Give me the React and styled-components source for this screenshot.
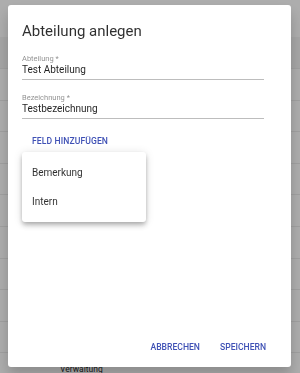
import React from "react";
import styled, { createGlobalStyle } from "styled-components";

const GlobalStyle = createGlobalStyle`
  html, body {
    margin: 0;
    padding: 0;
    background: #ffffff;
    font-family: Roboto, "Liberation Sans", sans-serif;
    overflow: hidden;
  }
`;

const Page = styled.div`
  width: 300px;
  height: 373px;
  overflow: hidden;
  background: #ffffff;
`;

const Toolbar = styled.div`
  height: 37px;
  background: #ffffff;
`;

const HeaderRow = styled.div`
  height: 31px;
  background: #f5f5f5;
  border-bottom: 1px solid #ececec;
`;

const Row = styled.div`
  height: 30.6px;
  border-bottom: 1px solid #ececec;
  display: flex;
  align-items: center;
  padding-left: 60px;
  font-size: 8.5px;
  color: rgba(0, 0, 0, 0.87);
`;

const Backdrop = styled.div`
  position: fixed;
  inset: 0;
  background: rgba(0, 0, 0, 0.32);
`;

const Dialog = styled.div`
  position: fixed;
  left: 8px;
  top: 5px;
  width: 283px;
  height: 362px;
  box-sizing: border-box;
  background: #ffffff;
  border-radius: 3px;
  box-shadow: 0 8px 14px rgba(0, 0, 0, 0.2);
  padding: 16px 14px 14px 14px;
  display: flex;
  flex-direction: column;
`;

const Title = styled.h2`
  margin: 0 0 13px 0;
  font-size: 15px;
  line-height: 20px;
  font-weight: 400;
  color: rgba(0, 0, 0, 0.82);
`;

const Field = styled.div`
  width: 242px;
  display: flex;
  flex-direction: column;
  border-bottom: 1px solid #bdbdbd;
  margin-bottom: ${(p) => p.$gap || 0}px;
`;

const Label = styled.span`
  font-size: 7.5px;
  line-height: 9px;
  color: rgba(0, 0, 0, 0.45);
`;

const Value = styled.span`
  font-size: 10px;
  line-height: 14px;
  padding-bottom: 2px;
  color: rgba(0, 0, 0, 0.87);
`;

const AddButton = styled.button`
  align-self: flex-start;
  margin: 16px 0 0 0;
  padding: 0 10px;
  border: none;
  background: none;
  font-family: inherit;
  font-size: 8.6px;
  font-weight: 500;
  line-height: 12px;
  letter-spacing: 0.1px;
  color: #3f51b5;
  text-transform: uppercase;
`;

const Actions = styled.div`
  margin-top: auto;
  display: flex;
  justify-content: flex-end;
  gap: 20px;
  padding-right: 11px;
  padding-bottom: 0;
`;

const ActionButton = styled.button`
  border: none;
  background: none;
  padding: 0;
  font-family: inherit;
  font-size: 8.6px;
  font-weight: 500;
  line-height: 12px;
  color: #3f51b5;
  text-transform: uppercase;
`;

const Menu = styled.div`
  position: fixed;
  left: 22px;
  top: 152px;
  width: 124px;
  box-sizing: border-box;
  padding: 6px 0;
  background: #ffffff;
  border-radius: 3px;
  box-shadow: 0 2px 4px -1px rgba(0, 0, 0, 0.2), 0 4px 5px 0 rgba(0, 0, 0, 0.14),
    0 1px 10px 0 rgba(0, 0, 0, 0.12);
`;

const MenuItem = styled.div`
  height: 29px;
  display: flex;
  align-items: center;
  padding: 0 10px;
  font-size: 10px;
  color: rgba(0, 0, 0, 0.82);
`;

const rows = ["", "", "", "", "", "", "", "", "", "Verwaltung"];

export default function App() {
  return (
    <>
      <GlobalStyle />
      <Page>
        <Toolbar />
        <HeaderRow />
        {rows.map((r, i) => (
          <Row key={i}>{r}</Row>
        ))}
      </Page>
      <Backdrop />
      <Dialog>
        <Title>Abteilung anlegen</Title>
        <Field $gap={13}>
          <Label>Abteilung *</Label>
          <Value>Test Abteilung</Value>
        </Field>
        <Field>
          <Label>Bezeichnung *</Label>
          <Value>Testbezeichnung</Value>
        </Field>
        <AddButton>Feld hinzufügen</AddButton>
        <Actions>
          <ActionButton>Abbrechen</ActionButton>
          <ActionButton>Speichern</ActionButton>
        </Actions>
      </Dialog>
      <Menu>
        <MenuItem>Bemerkung</MenuItem>
        <MenuItem>Intern</MenuItem>
      </Menu>
    </>
  );
}
